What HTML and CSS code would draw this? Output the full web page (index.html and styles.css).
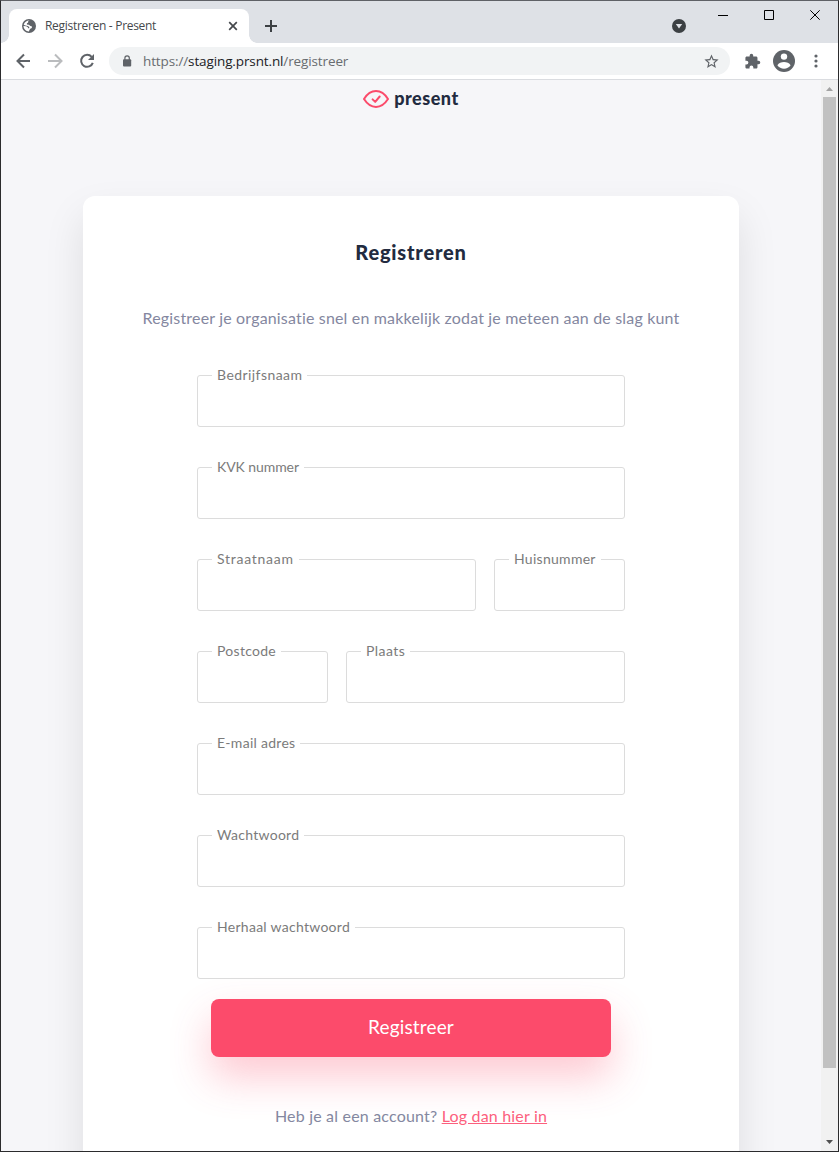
FILE: index.html
```html
<!DOCTYPE html>
<html lang="nl">
<head>
<meta charset="utf-8">
<title>Registreren - Present</title>
<link rel="stylesheet" href="styles.css">
</head>
<body>
<div class="window">
  <header class="tabstrip">
    <div class="tab">
      <svg class="globe" width="14" height="14" viewBox="0 0 14 14"><circle cx="7" cy="7" r="7" fill="#5f6368"/><path d="M7.600 1.500C6.200 2 5.600 2.800 6.300 3.500L4.900 4.300 4.900 5.600 6.900 5.700 8.400 6.900 10 7.400 9.800 8.900 8.300 9.700 7.400 11 7 12.500C3.900 12.400 1.600 10 1.500 7.100L4.200 7.200 5.900 8.300 5.900 9.300 7.200 9.300 7.300 8.100 5.800 6.900 3.500 6.400 1.700 5.700C2.400 3.200 4.700 1.400 7.600 1.500Z" fill="#fff"/></svg>
      <span class="tab-title">Registreren - Present</span>
      <svg class="tab-close" width="10" height="10" viewBox="0 0 10 10"><path d="M1.200 1.200 8.800 8.800M8.800 1.200 1.200 8.800" stroke="#45484c" stroke-width="1.700"/></svg>
    </div>
    <svg class="plus" width="12" height="12" viewBox="0 0 12 12"><path d="M6 0V12M0 6H12" stroke="#3c4043" stroke-width="2"/></svg>
    <svg class="search-tabs" width="14" height="14" viewBox="0 0 14 14"><circle cx="7" cy="7" r="7" fill="#3c4043"/><path d="M3.800 5H10.200L7 9.500Z" fill="#dee1e6"/></svg>
    <svg class="win-buttons" width="104" height="12" viewBox="0 0 104 12" fill="none" stroke="#000"><path d="M0 5.500H10M46.500 .5H55.500V9.500H46.500ZM92.300 .3 101.700 9.700M101.700 .3 92.300 9.700"/></svg>
  </header>
  <nav class="toolbar">
    <svg class="arrows" width="80" height="16" viewBox="0 0 80 16" fill="none" stroke-width="2"><path d="M15 8H2.500M9 1.500 2.500 8 9 14.500" stroke="#5f6368"/><path d="M33 8H46M40 1.500 46.500 8 40 14.500" stroke="#babcbe"/><path d="M76.700 3.900A6 6 0 1 0 77.800 9.800" stroke="#5f6368"/><path d="M79 1V7H73Z" fill="#5f6368"/></svg>
    <div class="omnibox">
      <svg class="lock" width="10" height="13" viewBox="0 0 10 13"><rect x="1" y="4.200" width="8.200" height="7.300" rx="1" fill="#5f6368"/><path d="M2.900 5V3A2.200 2.200 0 0 1 7.300 3V5" fill="none" stroke="#5f6368" stroke-width="1.200"/></svg>
      <span class="url">https://<span class="host">staging.prsnt.nl</span>/registreer</span>
      <svg class="star" width="17" height="17" viewBox="0 0 24 24"><path d="M22 9.240l-7.190-.62L12 2 9.190 8.630 2 9.240l5.460 4.730L5.820 21 12 17.270 18.180 21l-1.630-7.030L22 9.240zM12 15.400l-3.760 2.270 1-4.280-3.320-2.880 4.380-.38L12 6.100l1.710 4.040 4.380.38-3.320 2.880 1 4.280L12 15.400z" fill="#5f6368"/></svg>
    </div>
    <svg class="puzzle" width="17" height="17" viewBox="0 0 24 24"><path d="M20.500 11H19V7c0-1.100-.9-2-2-2h-4V3.500a2.500 2.500 0 0 0-5 0V5H4c-1.100 0-2 .9-2 2v3.800h1.500a2.700 2.700 0 0 1 0 5.400H2V20c0 1.100.9 2 2 2h3.800v-1.500a2.700 2.700 0 0 1 5.400 0V22H17c1.100 0 2-.9 2-2v-4h1.500a2.500 2.500 0 0 0 0-5z" fill="#5f6368"/></svg>
    <svg class="avatar" width="22" height="22" viewBox="0 0 22 22"><circle cx="11" cy="11" r="11" fill="#5f6368"/><circle cx="11" cy="6.600" r="3.200" fill="#fff"/><path d="M4.400 15.200C5.500 12.500 8.500 11.900 11 11.900S16.500 12.500 17.600 15.200A8 8 0 0 1 4.400 15.200Z" fill="#fff"/></svg>
    <svg class="dots" width="4" height="14" viewBox="0 0 4 14" fill="#5f6368"><circle cx="2" cy="2" r="1.600"/><circle cx="2" cy="7" r="1.600"/><circle cx="2" cy="12" r="1.600"/></svg>
  </nav>
  <div class="viewport">
    <main class="page">
      <div class="logo">
        <svg width="26" height="18" viewBox="0 0 26 18" fill="none" stroke="#fb4b6b" stroke-width="2" stroke-linecap="round" stroke-linejoin="round"><path d="M1 9C4 4.300 8 1.100 13 1.100S22 4.300 25 9C22 13.700 18 16.900 13 16.900S4 13.700 1 9Z"/><path d="M9.600 9.400 12.200 11.900 16.700 6.500"/></svg>
        <span class="brand">present</span>
      </div>
      <section class="card">
        <h1 class="title">Registreren</h1>
        <p class="intro">Registreer je organisatie snel en makkelijk zodat je meteen aan de slag kunt</p>
        <form class="form">
          <div class="field"><label class="wide">Bedrijfsnaam</label></div>
          <div class="field"><label class="tight">KVK nummer</label></div>
          <div class="row"><div class="field"><label class="wider">Straatnaam</label></div><div class="field short"><label>Huisnummer</label></div></div>
          <div class="row"><div class="field short"><label>Postcode</label></div><div class="field"><label class="wide">Plaats</label></div></div>
          <div class="field"><label>E-mail adres</label></div>
          <div class="field"><label>Wachtwoord</label></div>
          <div class="field"><label>Herhaal wachtwoord</label></div>
        </form>
        <button class="submit" type="button">Registreer</button>
        <p class="login">Heb je al een account? <a>Log dan hier in</a></p>
      </section>
    </main>
    <aside class="scrollbar">
      <svg width="17" height="17" viewBox="0 0 17 17"><path d="M5 11H12L8.500 7Z" fill="#a3a3a3"/></svg>
      <div class="thumb"></div>
      <svg width="17" height="17" viewBox="0 0 17 17"><path d="M5 6H12L8.500 10Z" fill="#505050"/></svg>
    </aside>
  </div>
</div>
</body>
</html>
```
FILE: styles.css
```css
* { box-sizing: border-box; }
body { margin: 0; overflow: hidden; font-family: Lato, sans-serif; }
svg { display: block; flex: none; }
h1, p { margin: 0; }
.window { width: 839px; height: 1152px; display: flex; flex-direction: column; border: 1px solid #2b2b2d; border-top-color: #5f6166; background: #fff; }
.tabstrip { height: 42px; flex: none; display: flex; align-items: flex-start; background: #dee1e6; padding-left: 8px; }
.tab { position: relative; width: 240px; height: 34px; margin-top: 8px; display: flex; align-items: center; background: #fff; border-radius: 8px 8px 0 0; padding: 0 11px 0 13px; }
/* flared feet of the active tab */
.tab::before, .tab::after { content: ""; position: absolute; bottom: 0; width: 8px; height: 8px; }
.tab::before { left: -8px; background: radial-gradient(circle at 0 0, #dee1e6 7.5px, #fff 8px); }
.tab::after { right: -8px; background: radial-gradient(circle at 100% 0, #dee1e6 7.5px, #fff 8px); }
.tab-title { flex: 1; margin-left: 9px; font: 12px/16px "Open Sans", sans-serif; letter-spacing: -.3px; color: #45484c; white-space: nowrap; }
.plus { margin: 19px 0 0 16px; }
.search-tabs { margin: 18px 0 0 395px; }
.win-buttons { margin: 9px 0 0 32px; }
.toolbar { height: 37px; flex: none; display: flex; align-items: center; border-bottom: 1px solid #dadce0; padding-left: 14px; }
.omnibox { width: 621px; height: 28px; margin-left: 14px; display: flex; align-items: center; background: #f1f3f4; border-radius: 14px; padding: 0 10px 0 13px; }
.url { flex: 1; margin-left: 11px; font: 13.5px/20px "Open Sans", sans-serif; letter-spacing: -.12px; color: #686c70; white-space: nowrap; }
.host { color: #202124; }
.puzzle { margin-left: 14px; }
.avatar { margin-left: 12px; }
.dots { margin-left: 19px; }
.viewport { flex: 1; min-height: 0; display: flex; background: #f6f6f9; }
.page { flex: 1; display: flex; flex-direction: column; align-items: center; overflow: hidden; }
.logo { display: flex; height: 116px; flex: none; gap: 5px; padding-top: 10px; }
.brand { font-size: 18px; font-weight: 900; line-height: 16px; letter-spacing: .5px; color: #222b40; }
.card { width: 656px; height: 1000px; flex: none; display: flex; flex-direction: column; align-items: center; background: #fff; border-radius: 12px; box-shadow: 0 20px 40px rgba(0, 0, 0, .1); padding-top: 43px; }
.title { font-size: 20px; font-weight: 900; line-height: 26px; letter-spacing: .8px; color: #222b40; }
.intro { margin-top: 41px; font-size: 16px; line-height: 24px; letter-spacing: .17px; color: #8487a0; white-space: nowrap; }
.form { width: 428px; margin-top: 45px; display: flex; flex-direction: column; gap: 40px; }
.row { display: flex; gap: 18px; }
.field { position: relative; flex: 1; height: 52px; min-height: 52px; border: 1px solid #dcdcdc; border-radius: 3px; }
.field.short { flex: 0 0 131px; }
.field label { position: absolute; left: 14px; top: -10px; padding: 0 5px; background: #fff; font-size: 14px; line-height: 18px; letter-spacing: .28px; color: #7b7b7b; white-space: nowrap; }
.field .tight { letter-spacing: -.08px; }
.field .wide { letter-spacing: .43px; }
.field .wider { letter-spacing: .74px; }
.submit { width: 400px; height: 58px; margin-top: 20px; flex: none; border: 0; border-radius: 8px; background: #fc4b6b; box-shadow: 0 20px 40px rgba(252, 75, 107, .3); color: #fff; font: 19px/24px Lato, sans-serif; letter-spacing: .15px; padding: 0 0 2px; }
.login { margin-top: 47px; font-size: 16px; line-height: 24px; letter-spacing: .19px; color: #8487a0; white-space: nowrap; }
.login a { color: #fc5f7d; text-decoration: underline; }
.scrollbar { width: 17px; flex: none; display: flex; flex-direction: column; align-items: center; background: #f1f1f1; }
.thumb { width: 13px; height: 971px; background: #c1c1c1; }
.scrollbar svg:last-child { margin-top: auto; }
```
